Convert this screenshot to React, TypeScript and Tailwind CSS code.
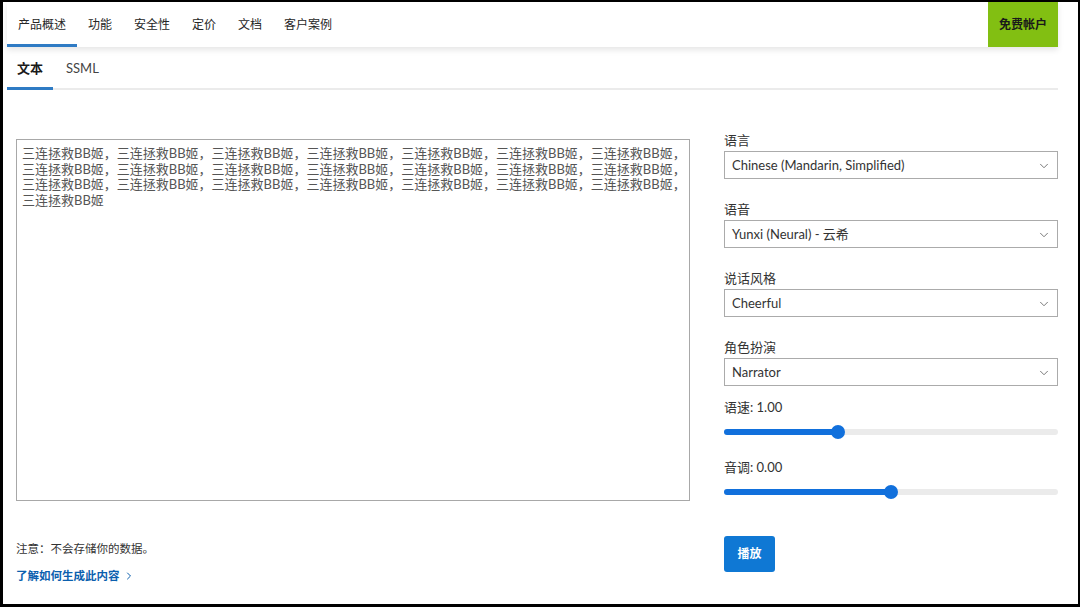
import React from 'react';
import { ChevronDown, ChevronRight } from 'lucide-react';

const navItems = ['产品概述', '功能', '安全性', '定价', '文档', '客户案例'];

const phrase = '三连拯救BB姬，';
const textLines = [
  phrase.repeat(7),
  phrase.repeat(7),
  phrase.repeat(7),
  '三连拯救BB姬',
];

interface SelectFieldProps {
  label: string;
  value: string;
  first?: boolean;
}

const SelectField: React.FC<SelectFieldProps> = ({ label, value, first }) => (
  <div className={first ? '' : 'mt-[21px]'}>
    <div className="h-[18px] text-[13px] leading-[18px] text-[#333]">{label}</div>
    <div className="mt-[2px] flex h-[28px] items-center justify-between border border-[#ababab] bg-white pl-[7px] pr-[6px] pt-[1px]">
      <span className="text-[13px] text-[#333]">{value}</span>
      <ChevronDown className="h-[14px] w-[14px] text-[#666]" strokeWidth={1.5} />
    </div>
  </div>
);

interface SliderProps {
  label: string;
  percent: number;
  className?: string;
}

const Slider: React.FC<SliderProps> = ({ label, percent, className }) => (
  <div className={className}>
    <div className="h-[18px] text-[13px] leading-[18px] text-[#333]">{label}</div>
    <div className="relative mt-[6px] flex h-[20px] items-center">
      <div className="h-[6px] w-full rounded-full bg-[#ebebeb]">
        <div className="h-[6px] rounded-full bg-[#1170dc]" style={{ width: `${percent}%` }} />
      </div>
      <div
        className="absolute top-1/2 h-[14px] w-[14px] -translate-x-1/2 -translate-y-1/2 rounded-full bg-[#1170dc]"
        style={{ left: `${percent}%` }}
      />
    </div>
  </div>
);

export default function App() {
  return (
    <div
      className="box-border h-[607px] w-[1080px] overflow-hidden border-t-2 border-r-2 border-b-[3px] border-l-[3px] border-black bg-white"
      style={{ fontFamily: 'Lato, "Noto Sans CJK SC", sans-serif' }}
    >
      <div className="ml-[4px] w-[1051px]">
        {/* Top nav */}
        <div className="flex h-[45px] items-stretch justify-between bg-white shadow-[0_3px_6px_rgba(0,0,0,0.10)]">
          <div className="flex items-stretch">
            {navItems.map((item, i) => (
              <div
                key={item}
                className={`flex items-center px-[11px] text-[12px] text-[#262626] ${
                  i === 0 ? 'border-b-[3px] border-[#2f7bc4] pt-[3px]' : ''
                }`}
              >
                {item}
              </div>
            ))}
          </div>
          <div className="flex w-[70px] items-center justify-center bg-[#82bf12] text-[12px] font-bold text-[#1a1a1a]">
            免费帐户
          </div>
        </div>

        {/* Tabs */}
        <div className="flex border-b-2 border-[#ebebeb] pt-[11px]">
          <div className="-mb-[2px] border-b-[3px] border-[#2f7bc4] px-[10px] pb-[9px] text-[13px] leading-[20px] font-bold text-[#1a1a1a]">
            文本
          </div>
          <div className="px-[13px] pb-[9px] text-[13px] leading-[20px] text-[#444]">SSML</div>
        </div>

        {/* Main */}
        <div className="mt-[41px] flex items-start">
          <div className="ml-[9px] w-[674px]">
            <div className="mt-[8px] h-[362px] border border-[#a8a8a8] px-[5px] pt-[6px] text-[13px] leading-[15.5px] text-[#555]">
              {textLines.map((line, i) => (
                <div key={i} className="whitespace-nowrap">
                  {line}
                </div>
              ))}
            </div>
            <div className="mt-[39px] h-[18px] text-[11.5px] leading-[18px] text-[#333]">
              注意：不会存储你的数据。
            </div>
            <div className="mt-[9px] flex h-[18px] items-center text-[11.5px] font-bold text-[#0b5fae]">
              了解如何生成此内容
              <ChevronRight className="ml-[3px] h-[12px] w-[12px] text-[#0b5fae]" strokeWidth={2} />
            </div>
          </div>

          <div className="ml-[34px] w-[334px]">
            <SelectField first label="语言" value="Chinese (Mandarin, Simplified)" />
            <SelectField label="语音" value="Yunxi (Neural) - 云希" />
            <SelectField label="说话风格" value="Cheerful" />
            <SelectField label="角色扮演" value="Narrator" />
            <Slider className="mt-[12px]" label="语速: 1.00" percent={34} />
            <Slider className="mt-[16px]" label="音调: 0.00" percent={50} />
            <button className="mt-[34px] h-[36px] w-[51px] rounded-[3px] bg-[#0f78d4] text-[12px] font-bold text-white">
              播放
            </button>
          </div>
        </div>
      </div>
    </div>
  );
}
